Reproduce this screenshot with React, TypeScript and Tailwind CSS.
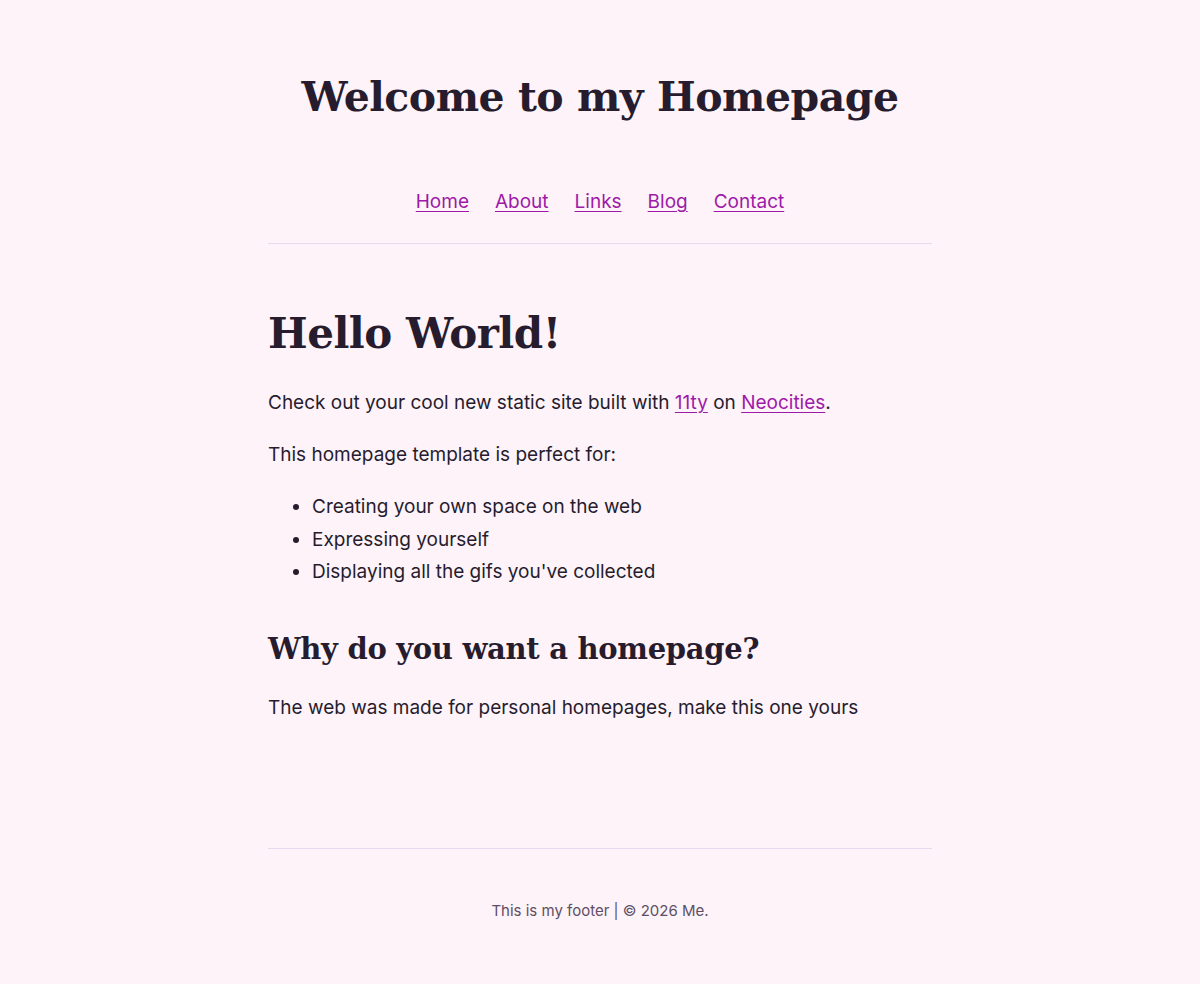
const serif = "font-['DejaVu_Serif',Georgia,serif]";

export default function App() {
  return (
    <div className="min-h-screen bg-[#fdf3f9] text-[#261c2e] font-['Inter',sans-serif]">
      <div className="max-w-[664px] mx-auto">
        <header className="pt-[62px] text-center">
          <h1 className={`${serif} font-bold text-[41px] leading-[70px] tracking-[-0.5px]`}>
            Welcome to my Homepage
          </h1>
          <nav className="mt-[55px] pb-[26px] border-b border-[#ead9f0] flex justify-center gap-[26px] text-[19px] leading-[30px]">
            {["Home", "About", "Links", "Blog", "Contact"].map((l) => (
              <a key={l} href="#" className="text-[#9d1aa8] underline underline-offset-[3px]">
                {l}
              </a>
            ))}
          </nav>
        </header>

        <main className="pt-[58px] pb-[124px] border-b border-[#ead9f0] text-[19px] leading-[32px]">
          <h2 className={`${serif} font-bold text-[42px] leading-[64px] tracking-[-0.5px]`}>Hello World!</h2>
          <p className="mt-[21px]">
            Check out your cool new static site built with{" "}
            <a href="#" className="text-[#9d1aa8] underline underline-offset-[3px]">11ty</a> on{" "}
            <a href="#" className="text-[#9d1aa8] underline underline-offset-[3px]">Neocities</a>.
          </p>
          <p className="mt-[20px]">This homepage template is perfect for:</p>
          <ul className="mt-[20px] list-disc pl-[44px] leading-[32.5px]">
            <li>Creating your own space on the web</li>
            <li>Expressing yourself</li>
            <li>Displaying all the gifs you've collected</li>
          </ul>
          <h3 className={`${serif} font-bold text-[29px] leading-[44px] mt-[38px] tracking-[-0.3px]`}>
            Why do you want a homepage?
          </h3>
          <p className="mt-[21px]">The web was made for personal homepages, make this one yours</p>
        </main>

        <footer className="pt-[50px] pb-[60px] text-center text-[15px] leading-[24px] text-[#5d4f66]">
          This is my footer | © 2026 Me.
        </footer>
      </div>
    </div>
  );
}
